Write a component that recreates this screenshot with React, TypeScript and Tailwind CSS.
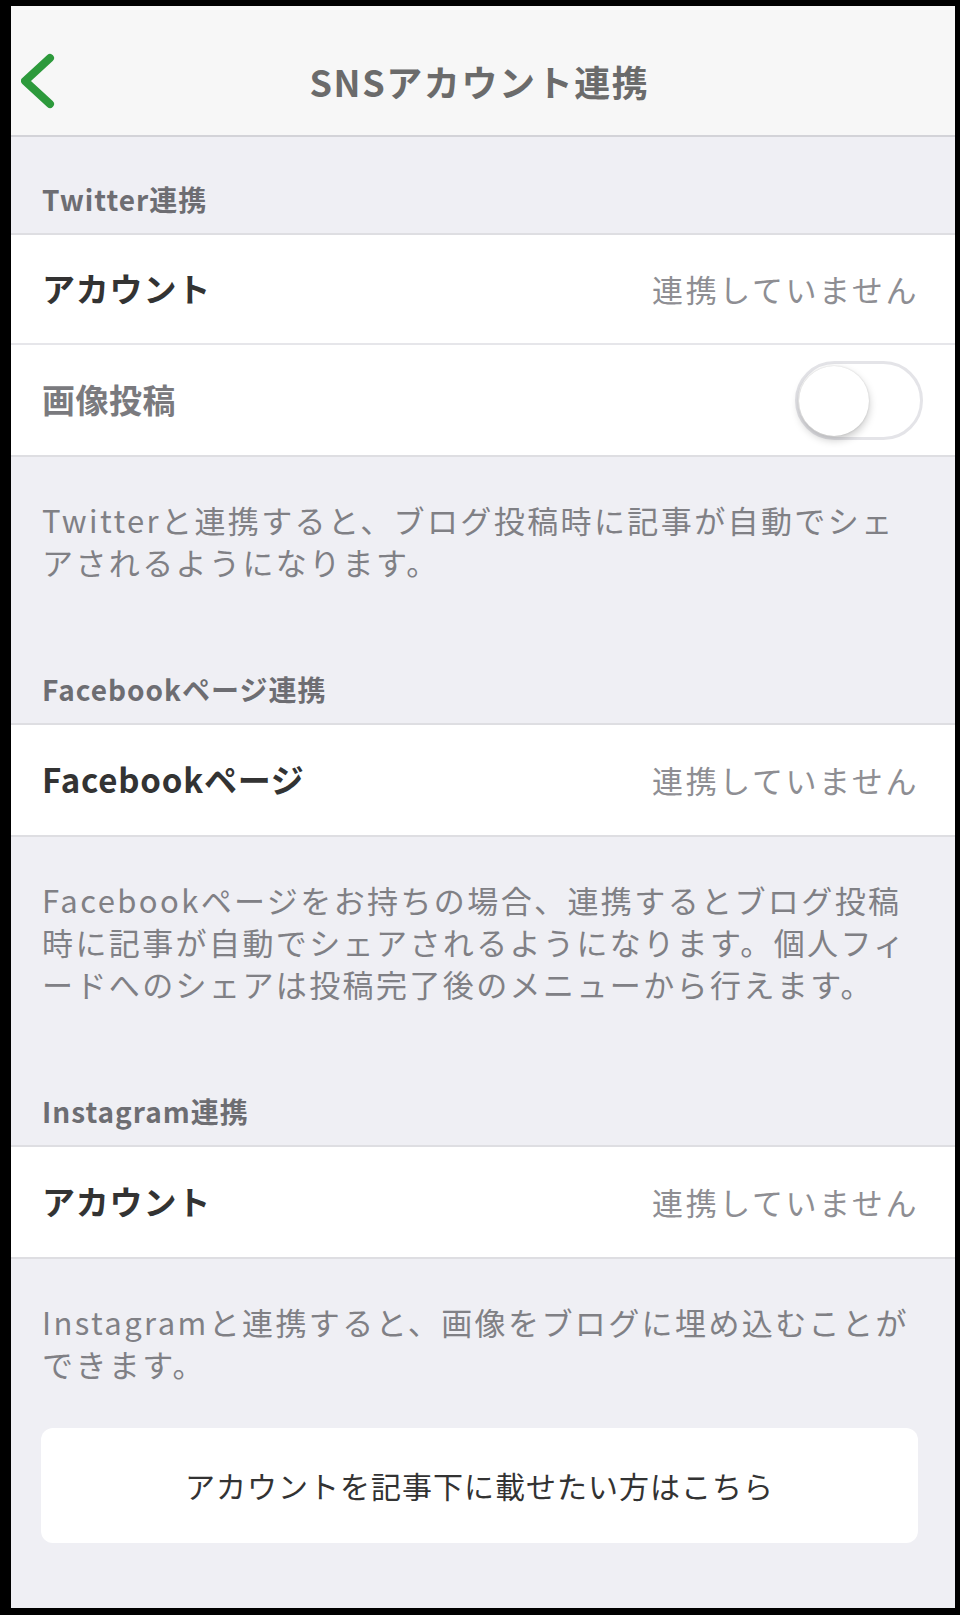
import React from 'react'

const font = { fontFamily: '"Noto Sans CJK JP", "Noto Sans", sans-serif' }

function SectionHeader({ title }: { title: string }) {
  return (
    <div className="h-[96px] flex items-end pb-[13px] pl-[31px] text-[28px] font-bold text-[#6d6d72] tracking-[1px]">
      {title}
    </div>
  )
}

function Row({ label, value }: { label: string; value?: string }) {
  return (
    <div className="h-[110px] flex items-center justify-between pl-[31px] pr-[36px] bg-white">
      <span className="text-[33px] font-bold text-[#333333] tracking-[0.8px]">{label}</span>
      {value && <span className="text-[31px] text-[#8e8e93] tracking-[2.6px]">{value}</span>}
    </div>
  )
}

function Toggle() {
  return (
    <div className="relative w-[128px] h-[79px] rounded-full border-[3px] border-[#e4e4e8] bg-white">
      <div className="absolute left-[1px] top-[2px] w-[70px] h-[70px] rounded-full bg-white shadow-[0_4px_8px_rgba(0,0,0,0.22),0_0_2px_rgba(0,0,0,0.15)]" />
    </div>
  )
}

function Description({ lines, last }: { lines: string[]; last?: boolean }) {
  return (
    <div
      className={`pt-[42px] ${last ? '' : 'pb-[44px]'} pl-[31px] text-[31px] leading-[42px] text-[#808085] tracking-[2.4px] whitespace-nowrap`}
    >
      {lines.map((l, i) => (
        <div key={i}>{l}</div>
      ))}
    </div>
  )
}

export default function App() {
  return (
    <div className="w-[960px] h-[1615px] bg-black pt-[6px] pl-[11px] pr-[5px] pb-[7px]" style={font}>
      <div className="h-full flex flex-col bg-[#efeff4] overflow-hidden">
        {/* header */}
        <div className="h-[131px] shrink-0 grid grid-cols-[1fr_auto_1fr] items-center pt-[20px] bg-[#f7f7f7] border-b-[2px] border-[#d3d3d8]">
          <div className="pl-[10px]">
            <svg width="40" height="60" viewBox="0 0 40 60" fill="none">
              <polyline
                points="29,7 4,30 29,53"
                stroke="#2d9a3c"
                strokeWidth="8"
                strokeLinecap="round"
                strokeLinejoin="round"
              />
            </svg>
          </div>
          <div className="pr-[7px] text-[36px] font-bold text-[#6b6b6b] tracking-[1.6px]">SNSアカウント連携</div>
          <div />
        </div>

        {/* Twitter */}
        <SectionHeader title="Twitter連携" />
        <div className="border-y-[2px] border-[#dedee2] divide-y-[2px] divide-[#e6e6ea]">
          <Row label="アカウント" value="連携していません" />
          <div className="h-[110px] flex items-center justify-between pl-[31px] pr-[32px] bg-white">
            <span className="text-[33px] font-bold text-[#7a7a7e] tracking-[0.5px]">画像投稿</span>
            <Toggle />
          </div>
        </div>
        <Description lines={['Twitterと連携すると、ブログ投稿時に記事が自動でシェ', 'アされるようになります。']} />

        {/* Facebook */}
        <SectionHeader title="Facebookページ連携" />
        <div className="border-y-[2px] border-[#dedee2]">
          <Row label="Facebookページ" value="連携していません" />
        </div>
        <Description
          lines={[
            'Facebookページをお持ちの場合、連携するとブログ投稿',
            '時に記事が自動でシェアされるようになります。個人フィ',
            'ードへのシェアは投稿完了後のメニューから行えます。',
          ]}
        />

        {/* Instagram */}
        <SectionHeader title="Instagram連携" />
        <div className="border-y-[2px] border-[#dedee2]">
          <Row label="アカウント" value="連携していません" />
        </div>
        <Description lines={['Instagramと連携すると、画像をブログに埋め込むことが', 'できます。']} last />

        <div className="mt-[43px] ml-[30px] mr-[37px] h-[115px] shrink-0 rounded-[12px] bg-white flex items-center justify-center text-[30px] text-[#333333] tracking-[1px]">
          アカウントを記事下に載せたい方はこちら
        </div>
      </div>
    </div>
  )
}
